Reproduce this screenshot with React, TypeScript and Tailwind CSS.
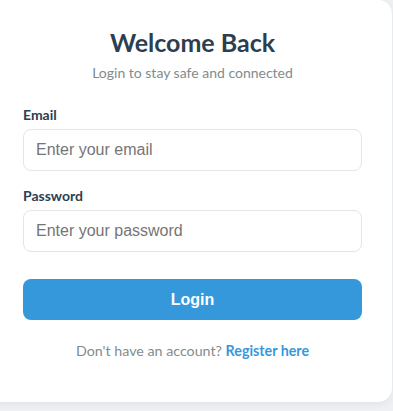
import React from "react";

export default function App() {
  return (
    <div className="h-[411px] w-[393px] overflow-hidden bg-[#eef0f3]">
      <div className="-ml-[24px] h-[402px] w-[416px] rounded-[14px] bg-white shadow-[0_2px_8px_rgba(0,0,0,0.06)]">
        <div className="pl-[47px] pr-[30px] pt-[26px]" style={{ fontFamily: 'Lato, sans-serif' }}>
          <h1 className="text-center text-[25px] font-bold leading-[32px] text-[#2c3e50]">Welcome Back</h1>
          <p className="mt-[5px] text-center text-[14px] leading-[20px] text-[#7f8c8d]">Login to stay safe and connected</p>
          <div className="mt-[23px]">
            <label className="block text-[14px] font-bold leading-[18px] text-[#2c3e50]">Email</label>
            <input
              type="email"
              placeholder="Enter your email"
              className="mt-[5px] block h-[42px] w-full rounded-lg border border-[#e3e5e8] px-[12px] text-[16px] text-[#333] outline-none placeholder:text-[#757575]"
              style={{ fontFamily: '"Liberation Sans", Arial, sans-serif' }}
            />
          </div>
          <div className="mt-[16px]">
            <label className="block text-[14px] font-bold leading-[18px] text-[#2c3e50]">Password</label>
            <input
              type="password"
              placeholder="Enter your password"
              autoFocus
              className="mt-[5px] block h-[42px] w-full rounded-lg border border-[#e3e5e8] px-[12px] text-[16px] text-[#333] outline-none placeholder:text-[#757575]"
              style={{ fontFamily: '"Liberation Sans", Arial, sans-serif' }}
            />
          </div>
          <button
            className="mt-[27px] block h-[41px] w-full rounded-lg bg-[#3498db] text-[16px] font-bold text-white"
            style={{ fontFamily: '"Liberation Sans", Arial, sans-serif' }}
          >
            Login
          </button>
          <p className="mt-[21px] text-center text-[14.25px] leading-[20px] text-[#7f8c8d]">
            Don't have an account?{" "}
            <a href="#" className="font-bold text-[#3498db]">Register here</a>
          </p>
        </div>
      </div>
    </div>
  );
}
